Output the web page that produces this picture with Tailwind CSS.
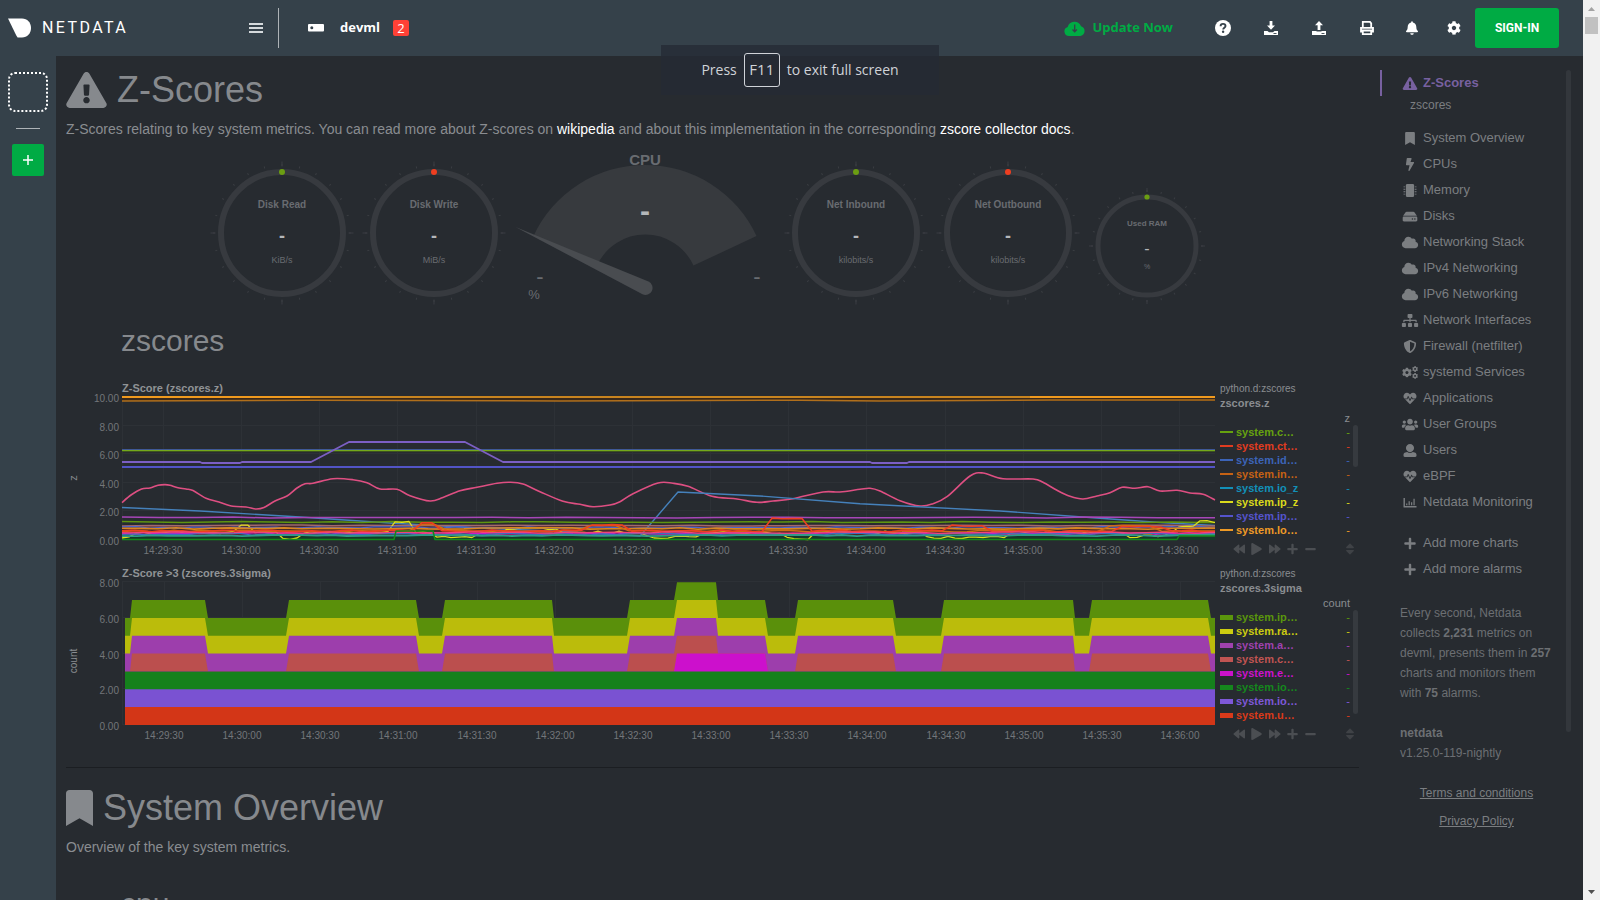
<!DOCTYPE html>
<html lang="en">
<head>
<meta charset="utf-8">
<title>devml - Netdata</title>
<script src="https://cdn.jsdelivr.net/npm/@tailwindcss/browser@4"></script>
</head>
<body class="h-screen overflow-hidden bg-[#272b30] font-['Liberation_Sans',Arial,sans-serif] text-[#8a8d91]">

<!-- Icon definitions -->
<svg class="hidden" aria-hidden="true">
  <symbol id="warn" viewBox="0 0 576 512"><path d="M569.517 440.013C587.975 472.007 564.806 512 527.94 512H48.054c-36.937 0-59.999-40.055-41.577-71.987L246.423 23.985c18.467-32.009 64.72-31.951 83.154 0l239.94 416.028zM288 354c-25.405 0-46 20.595-46 46s20.595 46 46 46 46-20.595 46-46-20.595-46-46-46zm-43.673-165.346l7.418 136c.347 6.364 5.609 11.346 11.982 11.346h48.546c6.373 0 11.635-4.982 11.982-11.346l7.418-136c.375-6.874-5.098-12.654-11.982-12.654h-63.383c-6.884 0-12.356 5.78-11.981 12.654z"/></symbol>
  <symbol id="bookmark" viewBox="0 0 384 512"><path d="M0 512V48C0 21.49 21.49 0 48 0h288c26.51 0 48 21.49 48 48v464L192 400 0 512z"/></symbol>
  <symbol id="bolt" viewBox="0 0 320 512"><path d="M296 160H180.6l42.6-129.8C227.2 15 215.7 0 200 0H56C44 0 33.8 8.9 32.2 20.8l-32 240C-1.7 275.2 9.5 288 24 288h118.7L96.6 482.5c-3.6 15.2 8 29.5 23.3 29.5 8.4 0 16.4-4.4 20.8-12l176-304c9.3-15.9-2.2-36-20.7-36z"/></symbol>
  <symbol id="chip" viewBox="0 0 512 512"><path d="M144 0h224a48 48 0 0 1 48 48v416a48 48 0 0 1-48 48H144a48 48 0 0 1-48-48V48a48 48 0 0 1 48-48z"/><path d="M0 94h72v36H0zM0 190h72v36H0zM0 286h72v36H0zM0 382h72v36H0zM440 94h72v36h-72zM440 190h72v36h-72zM440 286h72v36h-72zM440 382h72v36h-72z"/></symbol>
  <symbol id="hdd" viewBox="0 0 576 512"><path d="M576 304v96c0 26.51-21.49 48-48 48H48c-26.51 0-48-21.49-48-48v-96c0-26.51 21.49-48 48-48h480c26.51 0 48 21.49 48 48zm-48-80a79.557 79.557 0 0 1 30.777 6.165L462.25 85.374A48.003 48.003 0 0 0 422.311 64H153.689a48 48 0 0 0-39.938 21.374L17.223 230.165A79.557 79.557 0 0 1 48 224h480zm-48 96c-17.673 0-32 14.327-32 32s14.327 32 32 32 32-14.327 32-32-14.327-32-32-32zm-96 0c-17.673 0-32 14.327-32 32s14.327 32 32 32 32-14.327 32-32-14.327-32-32-32z"/></symbol>
  <symbol id="cloud" viewBox="0 0 640 512"><path d="M537.6 226.6c4.1-10.7 6.4-22.4 6.4-34.6 0-53-43-96-96-96-19.7 0-38.1 6-53.3 16.2C367 64.2 315.3 32 256 32c-88.4 0-160 71.6-160 160 0 2.7.1 5.4.2 8.1C40.2 219.8 0 273.2 0 336c0 79.5 64.5 144 144 144h368c70.7 0 128-57.3 128-128 0-61.9-44-113.6-102.4-125.4z"/></symbol>
  <symbol id="sitemap" viewBox="0 0 640 512"><path d="M128 352H32c-17.67 0-32 14.33-32 32v96c0 17.67 14.33 32 32 32h96c17.67 0 32-14.33 32-32v-96c0-17.67-14.33-32-32-32zm-24-80h192v48h48v-48h192v48h48v-57.59c0-21.17-17.23-38.41-38.41-38.41H344v-64h40c17.67 0 32-14.33 32-32V32c0-17.67-14.33-32-32-32H256c-17.67 0-32 14.33-32 32v96c0 17.67 14.33 32 32 32h40v64H94.41C73.23 224 56 241.23 56 262.41V320h48v-48zm264 80h-96c-17.67 0-32 14.33-32 32v96c0 17.67 14.33 32 32 32h96c17.67 0 32-14.33 32-32v-96c0-17.67-14.33-32-32-32zm240 0h-96c-17.67 0-32 14.33-32 32v96c0 17.67 14.33 32 32 32h96c17.67 0 32-14.33 32-32v-96c0-17.67-14.33-32-32-32z"/></symbol>
  <symbol id="shield" viewBox="0 0 512 512"><path d="M466.5 83.7l-192-80a48.15 48.15 0 0 0-36.9 0l-192 80C27.7 91.1 16 108.6 16 128c0 198.5 114.5 335.7 221.5 380.3 11.8 4.9 25.1 4.9 36.9 0C360.1 472.6 496 349.3 496 128c0-19.4-11.7-36.9-29.5-44.3zM256.1 446.3l-.1-381 175.9 73.3c-3.3 151.4-82.1 261.1-175.8 307.7z"/></symbol>
  <symbol id="cog" viewBox="0 0 512 512"><path d="M487.4 315.7l-42.6-24.6c4.3-23.2 4.3-47 0-70.2l42.6-24.6c4.9-2.8 7.1-8.6 5.5-14-11.1-35.6-30-67.8-54.7-94.6-3.8-4.1-10-5.1-14.8-2.3L380.8 110c-17.9-15.4-38.5-27.3-60.8-35.1V25.8c0-5.6-3.9-10.5-9.4-11.7-36.7-8.2-74.3-7.8-109.2 0-5.5 1.2-9.4 6.1-9.4 11.7V75c-22.2 7.9-42.8 19.8-60.8 35.1L88.7 85.5c-4.9-2.8-11-1.9-14.8 2.3-24.7 26.7-43.6 58.9-54.7 94.6-1.7 5.4.6 11.2 5.5 14L67.3 221c-4.3 23.2-4.3 47 0 70.2l-42.6 24.6c-4.9 2.8-7.1 8.6-5.5 14 11.1 35.6 30 67.8 54.7 94.6 3.8 4.1 10 5.1 14.8 2.3l42.6-24.6c17.9 15.4 38.5 27.3 60.8 35.1v49.2c0 5.6 3.9 10.5 9.4 11.7 36.7 8.2 74.3 7.8 109.2 0 5.5-1.2 9.4-6.1 9.4-11.7v-49.2c22.2-7.9 42.8-19.8 60.8-35.1l42.6 24.6c4.9 2.8 11 1.9 14.8-2.3 24.7-26.7 43.6-58.9 54.7-94.6 1.5-5.5-.7-11.3-5.6-14.1zM256 336c-44.1 0-80-35.9-80-80s35.9-80 80-80 80 35.9 80 80-35.9 80-80 80z"/></symbol>
  <symbol id="cogs" viewBox="0 0 640 512"><use href="#cog" x="0" y="56" width="400" height="400"/><use href="#cog" x="400" y="0" width="240" height="240"/><use href="#cog" x="400" y="272" width="240" height="240"/></symbol>
  <symbol id="heart" viewBox="0 0 512 512"><path d="M320.2 243.8l-49.7 99.4c-6 12.1-23.4 11.7-28.9-.6l-56.9-126.3-30 71.7H60.6l182.5 186.5c7.1 7.3 18.6 7.3 25.7 0L451.4 288H342.3l-22.1-44.2zM473.7 73.9l-2.4-2.5c-51.5-52.6-135.8-52.6-187.4 0L256 100l-27.9-28.5c-51.5-52.7-135.9-52.7-187.4 0l-2.4 2.4C-10.4 123.7-12.5 203 31 256h102.4l35.9-86.2c5.4-12.9 23.6-13.1 29.2-.4l58.2 129.3 49-97.9c5.9-11.8 22.7-11.8 28.6 0l27.6 55.2H481c43.5-53 41.4-132.3-7.3-182.1z"/></symbol>
  <symbol id="users" viewBox="0 0 640 512"><path d="M96 224c35.3 0 64-28.7 64-64s-28.7-64-64-64-64 28.7-64 64 28.7 64 64 64zm448 0c35.3 0 64-28.7 64-64s-28.7-64-64-64-64 28.7-64 64 28.7 64 64 64zm32 32h-64c-17.6 0-33.5 7.1-45.1 18.6 40.3 22.1 68.9 62 75.1 109.4h66c17.7 0 32-14.3 32-32v-32c0-35.3-28.7-64-64-64zm-256 0c61.9 0 112-50.1 112-112S381.9 32 320 32 208 82.1 208 144s50.1 112 112 112zm76.8 32h-8.3c-20.8 10-43.9 16-68.5 16s-47.6-6-68.5-16h-8.3C179.6 288 128 339.6 128 403.2V432c0 26.5 21.5 48 48 48h288c26.5 0 48-21.5 48-48v-28.8c0-63.6-51.6-115.2-115.2-115.2zm-223.7-13.4C161.5 263.1 145.6 256 128 256H64c-35.3 0-64 28.7-64 64v32c0 17.7 14.3 32 32 32h65.9c6.3-47.4 34.9-87.3 75.2-109.4z"/></symbol>
  <symbol id="user" viewBox="0 0 512 512"><path d="M256 0c88.366 0 160 71.634 160 160s-71.634 160-160 160S96 248.366 96 160 167.634 0 256 0zm183.283 333.821l-71.313-17.828c-74.923 53.89-165.738 41.864-223.94 0l-71.313 17.828C29.981 344.505 0 382.903 0 426.955V464c0 26.51 21.49 48 48 48h416c26.51 0 48-21.49 48-48v-37.045c0-44.052-29.981-82.45-72.717-93.134z"/></symbol>
  <symbol id="bars" viewBox="0 0 512 512"><path d="M0 76h56v320h456v56H20a20 20 0 0 1-20-20zM104 300h48v64h-48zM200 204h48v160h-48zM296 250h48v114h-48zM392 108h48v256h-48z"/></symbol>
  <symbol id="plus" viewBox="0 0 448 512"><path d="M416 208H272V64c0-17.67-14.33-32-32-32h-32c-17.67 0-32 14.33-32 32v144H32c-17.67 0-32 14.33-32 32v32c0 17.67 14.33 32 32 32h144v144c0 17.67 14.33 32 32 32h32c17.67 0 32-14.33 32-32V304h144c17.67 0 32-14.33 32-32v-32c0-17.67-14.33-32-32-32z"/></symbol>
  <symbol id="minus" viewBox="0 0 448 512"><path d="M416 208H32c-17.67 0-32 14.33-32 32v32c0 17.67 14.33 32 32 32h384c17.67 0 32-14.33 32-32v-32c0-17.67-14.33-32-32-32z"/></symbol>
  <symbol id="play" viewBox="0 0 448 512"><path d="M424.4 214.7L72.4 6.6C43.8-10.3 0 6.1 0 47.9V464c0 37.5 40.7 60.1 72.4 41.3l352-208c31.4-18.5 31.5-64.1 0-82.6z"/></symbol>
  <symbol id="fwd" viewBox="0 0 512 512"><path d="M0 96v320c0 27 31 41 52 24l188-154v130c0 27 31 41 52 24l192-160c15-13 15-36 0-48L292 72c-21-17-52-3-52 24v130L52 72C31 55 0 69 0 96z"/></symbol>
  <symbol id="sort" viewBox="0 0 320 512"><path d="M41 288h238c21 0 32 26 17 41L177 448c-9 9-25 9-34 0L24 329c-15-15-4-41 17-41zM296 183L177 64c-9-9-25-9-34 0L24 183c-15 15-4 41 17 41h238c21 0 32-26 17-41z"/></symbol>
  <symbol id="bell" viewBox="0 0 448 512"><path d="M224 512c35.32 0 63.97-28.65 63.97-64H160.03c0 35.35 28.65 64 63.97 64zm215.39-149.71c-19.32-20.76-55.47-51.99-55.47-154.29 0-77.7-54.48-139.9-127.94-155.16V32c0-17.67-14.32-32-31.98-32s-31.98 14.33-31.98 32v20.84C118.56 68.1 64.08 130.3 64.08 208c0 102.3-36.15 133.53-55.47 154.29-6 6.45-8.66 14.16-8.61 21.71.11 16.4 12.98 32 32.1 32h383.8c19.12 0 32-15.6 32.1-32 .05-7.55-2.61-15.27-8.61-21.71z"/></symbol>
</svg>

<div class="flex h-screen">
  <div class="relative flex min-w-0 flex-1 flex-col">

    <header class="flex h-14 shrink-0 items-center bg-[#35414a] text-white">
      <a href="#" class="flex items-center gap-[10px] pl-2" aria-label="Netdata">
        <svg class="h-5 w-6" viewBox="0 0 24 20" fill="currentColor"><path d="M0 .5h14C19.300.5 23 4.600 23 10s-3.800 9.500-9 9.500H9.600L8.300 17.400z"/></svg>
        <span class="w-[86px] font-['Roboto',sans-serif] text-base leading-5 tracking-[0.15em]">NETDATA</span>
      </a>
      <button type="button" class="ml-[121px] grid h-6 w-[14px] place-items-center" aria-label="Menu">
        <svg class="h-3 w-[14px]" viewBox="0 0 14 12" fill="#d5d9dc"><path d="M0 1h14v2H0zM0 5h14v2H0zM0 9h14v2H0z"/></svg>
      </button>
      <div class="ml-[15px] h-10 w-px bg-[#aeb3b7]"></div>
      <svg class="ml-[29px] h-2 w-4" viewBox="0 0 16 8"><rect width="16" height="7.500" rx="1" fill="#fff"/><circle cx="3.800" cy="3.800" r="1.500" fill="#35414a"/></svg>
      <span class="ml-4 font-['Open_Sans',sans-serif] text-[13px] font-bold">devml</span>
      <span class="ml-[13px] grid size-4 place-items-center rounded-xs bg-[#ff4136] font-['Open_Sans',sans-serif] text-[13px] leading-4">2</span>

      <div class="ml-auto flex items-center pr-6">
        <button type="button" class="mr-[26px] flex items-center gap-[7px] font-['Open_Sans',sans-serif] text-[13px] font-bold text-[#00ab44]">
          <svg class="h-[18px] w-[21px]" viewBox="0 0 21 18"><path fill="currentColor" d="M5 17a4.600 4.600 0 0 1-1.300-9A7 7 0 0 1 17 7.300 5 5 0 0 1 16.500 17z"/><path d="M10.700 5.500v7M8.500 10.500l2.200 2.300 2.200-2.300" fill="none" stroke="#35414a" stroke-width="1.300"/></svg>
          Update Now
        </button>
        <button type="button" class="grid h-10 w-12 place-items-center" aria-label="Help"><svg class="size-4" viewBox="0 0 16 16"><circle cx="8" cy="8" r="8" fill="#fff"/><path d="M5.600 6.200C5.600 4.700 6.600 3.900 8 3.900s2.500.9 2.500 2.200c0 1.700-2.300 1.800-2.300 3.500" fill="none" stroke="#35414a" stroke-width="1.900"/><circle cx="8.100" cy="11.800" r="1.200" fill="#35414a"/></svg></button>
        <button type="button" class="grid h-10 w-12 place-items-center" aria-label="Import"><svg class="h-[14px] w-[14px]" viewBox="0 0 14 14" fill="#fff"><path d="M5.600 0h2.800v4.500H11L7 8.700 3 4.500h2.600zM0 10h3.500L5 11.200h4L10.500 10H14v4H0z"/><path d="M9.500 12h3v.9h-3z" fill="#35414a"/></svg></button>
        <button type="button" class="grid h-10 w-12 place-items-center" aria-label="Export"><svg class="h-[14px] w-[14px]" viewBox="0 0 14 14" fill="#fff"><path d="M5.600 9h2.800V4.200H11L7 0 3 4.200h2.600zM0 10h4.500v.5h5V10H14v4H0z"/><path d="M9.500 12h3v.9h-3z" fill="#35414a"/></svg></button>
        <button type="button" class="grid h-10 w-12 place-items-center" aria-label="Print"><svg class="h-[14px] w-[14px]" viewBox="0 0 14 14" fill="none" stroke="#fff" stroke-width="1.800"><path d="M2.800 6V.900h7.200l1.200 1.500V6"/><path d="M2.800 10.500H1V6.800h12v3.700h-1.800M2.800 9.500h8.400v3.600H2.800z"/></svg></button>
        <button type="button" class="grid h-10 w-[42px] place-items-center" aria-label="Alarms"><svg class="h-[14px] w-3 fill-white"><use href="#bell"/></svg></button>
        <button type="button" class="grid h-10 w-[42px] place-items-center" aria-label="Settings"><svg class="size-[14px] fill-white"><use href="#cog"/></svg></button>
        <button type="button" class="h-10 w-[84px] rounded-[3px] bg-[#00ab44] font-['Roboto',sans-serif] text-xs font-bold">SIGN-IN</button>
      </div>
    </header>

    <div class="flex min-h-0 flex-1">
      <nav class="flex w-14 shrink-0 flex-col items-center bg-[#35414a] pt-4" aria-label="Spaces">
        <button type="button" class="size-10 rounded-[7px] border-2 border-dotted border-white" aria-label="Space"></button>
        <div class="mt-4 h-px w-6 bg-[#aeb3b7]"></div>
        <button type="button" class="mt-[15px] grid size-8 place-items-center rounded-xs bg-[#00ab44]" aria-label="Add space"><svg class="size-[10px]" viewBox="0 0 10 10" stroke="#fff" stroke-width="1.500"><path d="M5 0v10M0 5h10"/></svg></button>
      </nav>

      <main class="min-w-0 flex-1 overflow-hidden pl-[10px]">
        <h1 class="mt-[14px] flex items-center gap-[10px] text-4xl leading-10 text-[#86898d]"><svg class="h-9 w-[41px] fill-[#86898d]"><use href="#warn"/></svg>Z-Scores</h1>
        <p class="mt-[9px] text-sm leading-5">Z-Scores relating to key system metrics. You can read more about Z-scores on <a href="#" class="text-white">wikipedia</a> and about this implementation in the corresponding <a href="#" class="text-white">zscore collector docs</a>.</p>

        <div id="gauges" class="mt-[10px] flex h-40 items-end justify-center pr-[10px]"></div>

        <h2 class="mt-[14px] pl-[55px] text-3xl leading-9 text-[#86898d]">zscores</h2>
        <div id="charts" class="mt-[22px] flex flex-col gap-1"></div>

        <hr class="mt-5 border-[#1b1e22]">
        <h1 class="mt-5 flex items-center gap-[10px] text-4xl leading-10 text-[#86898d]"><svg class="h-9 w-[27px] fill-[#86898d]"><use href="#bookmark"/></svg>System Overview</h1>
        <p class="mt-[9px] text-sm leading-5">Overview of the key system metrics.</p>
        <h2 class="mt-[29px] pl-[55px] text-3xl leading-9 text-[#86898d]">cpu</h2>
      </main>

      <aside class="flex w-56 shrink-0 justify-between overflow-hidden pl-[21px] pr-3 pt-[14px]">
        <div class="w-[173px]">
          <ul id="menu" class="text-[13px] text-[#7b7e81]"></ul>
          <div class="mt-[21px] pl-5 text-xs leading-5 text-[#6c6f73]">
            <p>Every second, Netdata collects <b>2,231</b> metrics on devml, presents them in <b>257</b> charts and monitors them with <b>75</b> alarms.</p>
            <p class="mt-5"><b>netdata</b><br>v1.25.0-119-nightly</p>
            <p class="mt-5 text-center text-[#7b7e81]"><a href="#" class="underline">Terms and conditions</a></p>
            <p class="mt-2 text-center text-[#7b7e81]"><a href="#" class="underline">Privacy Policy</a></p>
          </div>
        </div>
        <div class="h-[662px] w-[5px] rounded-sm bg-[#33373c]"></div>
      </aside>
    </div>

    <!-- Full-screen hint -->
    <div class="absolute left-[661px] top-[45px] flex h-[50px] w-[278px] items-center justify-center gap-[7px] bg-[#262b35]/80 pb-px font-['Open_Sans',sans-serif] text-[14px] text-[#d0d3d8]">
      Press <kbd class="grid h-[34px] w-9 place-items-center rounded-[3px] border border-[#d0d3d8] font-['Open_Sans',sans-serif] text-[15px]">F11</kbd> to exit full screen
    </div>
  </div>

  <!-- Page scroll bar -->
  <div class="flex w-[17px] shrink-0 flex-col items-center bg-[#f1f1f1] pb-[6px] pt-[7px]">
    <svg class="h-1 w-[7px]" viewBox="0 0 7 4" fill="#a3a3a3"><path d="M0 4h7L3.500 0z"/></svg>
    <div class="mt-[6px] h-[17px] w-[13px] bg-[#c1c1c1]"></div>
    <svg class="mt-auto h-1 w-[7px]" viewBox="0 0 7 4" fill="#505050"><path d="M0 0h7L3.500 4z"/></svg>
  </div>
</div>

<script>
/* ---------- side menu ---------- */
const menu = [
  ['bookmark','System Overview'],['bolt','CPUs'],['chip','Memory'],['hdd','Disks'],['cloud','Networking Stack'],
  ['cloud','IPv4 Networking'],['cloud','IPv6 Networking'],['sitemap','Network Interfaces'],['shield','Firewall (netfilter)'],
  ['cogs','systemd Services'],['heart','Applications'],['users','User Groups'],['user','Users'],['heart','eBPF'],['bars','Netdata Monitoring']
];
const item = ([icon, name]) => `<li><a href="#" class="flex h-[26px] items-center gap-[3px] pl-5"><svg class="h-[13px] w-5 fill-[#7b7e81]"><use href="#${icon}"/></svg>${name}</a></li>`;
document.getElementById('menu').innerHTML =
  `<li class="mb-[11px]"><a href="#" class="flex h-[26px] items-center gap-[3px] border-l-2 border-[#7861a0] pl-[18px] font-bold text-[#7861a0]"><svg class="h-[13px] w-5 fill-[#7861a0]"><use href="#warn"/></svg>Z-Scores</a>
   <a href="#" class="block h-[18px] pl-[30px] text-xs leading-[18px]">zscores</a></li>` +
  menu.map(item).join('') + '<li class="h-[15px]"></li>' +
  [['plus','Add more charts'],['plus','Add more alarms']].map(item).join('');

/* ---------- gauges ---------- */
const ring = (title, unit, dot) => `<svg class="size-[152px] shrink-0" viewBox="0 0 152 152" text-anchor="middle">
  <circle cx="76" cy="76" r="61" fill="none" stroke="#373a3f" stroke-width="6"/>
  <circle cx="76" cy="76" r="68" fill="none" stroke="#3a3d42" stroke-width="2" pathLength="24" stroke-dasharray=".06 .94" stroke-dashoffset=".03"/>
  <circle cx="76" cy="76" r="69" fill="none" stroke="#3a3d42" stroke-width="5" pathLength="4" stroke-dasharray=".01 .99" stroke-dashoffset=".005"/>
  <circle cx="76" cy="15" r="3" fill="${dot}"/>
  <text x="76" y="51" font-size="10" font-weight="bold" fill="#696c71">${title}</text>
  <text x="76" y="85" font-size="18" font-weight="bold" fill="#b4b7ba">-</text>
  <text x="76" y="106" font-size="9" fill="#696c71">${unit}</text></svg>`;
const cpu = `<svg class="h-40 w-[270px] shrink-0" viewBox="510 149 270 160" text-anchor="middle">
  <path d="M533.500 236A123 123 0 0 1 756.500 236L693.500 265.600A53 53 0 0 0 597 265.600Z" fill="#373a3e"/>
  <path d="M515.500 227L648.500 281.600A7 7 0 1 1 642.500 294.300Z" fill="#494c50"/>
  <text x="645" y="165" font-size="15" font-weight="bold" fill="#696c71">CPU</text>
  <text x="645" y="221" font-size="30" font-weight="bold" fill="#b4b7ba">-</text>
  <text x="540" y="284" font-size="22" fill="#696c71">-</text><text x="757" y="284" font-size="22" fill="#696c71">-</text>
  <text x="534" y="299" font-size="13" fill="#696c71">%</text></svg>`;
const ram = `<svg class="size-[126px] shrink-0" viewBox="0 0 126 126" text-anchor="middle">
  <circle cx="63" cy="63" r="49" fill="none" stroke="#373a3f" stroke-width="5"/>
  <circle cx="63" cy="63" r="55" fill="none" stroke="#3a3d42" stroke-width="2" pathLength="24" stroke-dasharray=".07 .93" stroke-dashoffset=".035"/>
  <circle cx="63" cy="63" r="56" fill="none" stroke="#3a3d42" stroke-width="4" pathLength="4" stroke-dasharray=".012 .988" stroke-dashoffset=".006"/>
  <circle cx="63" cy="14" r="2.600" fill="#6b9e12"/>
  <text x="63" y="43" font-size="8" font-weight="bold" fill="#696c71">Used RAM</text>
  <text x="63" y="71" font-size="16" fill="#b4b7ba">-</text>
  <text x="63" y="86" font-size="7" fill="#696c71">%</text></svg>`;
document.getElementById('gauges').innerHTML = ring('Disk Read','KiB/s','#6b9e12') + ring('Disk Write','MiB/s','#ee3e20') + cpu +
  ring('Net Inbound','kilobits/s','#6b9e12') + ring('Net Outbound','kilobits/s','#ee3e20') + ram;

/* ---------- charts ---------- */
const L = 122, R = 1215;
const line = (pts, color, w = 1.2) => `<polyline points="${pts.map(p => p.join()).join(' ')}" fill="none" stroke="${color}" stroke-width="${w}" stroke-linejoin="round"/>`;
const flat = (y, color, w) => line([[L, y], [R, y]], color, w);
let seed = 11;
const rnd = () => (seed = (seed * 16807) % 2147483647) / 2147483647;
const noisy = (base, amp, color, step = 12, w = 1.2, bumps = []) => {
  const pts = [];
  for (let x = L; x <= R; x += step) {
    const b = bumps.find(q => x >= q[0] && x <= q[1]);
    pts.push([x, +(base + (b ? b[2] : 0) + (rnd() - .5) * amp * 2).toFixed(1)]);
  }
  pts.push([R, pts[pts.length - 1][1]]);
  return line(pts, color, w);
};
const smooth = (p, color, w) => {
  let d = `M${p[0]}`;
  for (let i = 0; i < p.length - 1; i++) {
    const a = p[i - 1] || p[i], b = p[i], c = p[i + 1], e = p[i + 2] || c;
    d += `C${b[0] + (c[0] - a[0]) / 6} ${b[1] + (c[1] - a[1]) / 6} ${c[0] - (e[0] - b[0]) / 6} ${c[1] - (e[1] - b[1]) / 6} ${c}`;
  }
  return `<path d="${d}" fill="none" stroke="${color}" stroke-width="${w}"/>`;
};
const grid = (top, bottom, n, x0) => {
  let s = `<path d="M${L + .5} ${top}V${bottom}`;
  for (let i = 0; i < 14; i++) s += `M${Math.round(x0 + i * 78.15) + .5} ${top}V${bottom}`;
  for (let i = 0; i <= n; i++) s += `M${L} ${Math.round(top + (bottom - top) * i / n) - .5}H${R}`;
  return s + '" stroke="#2d3136" fill="none"/>';
};
const labels = (top, bottom, n, x0, base) => {
  let s = '<g font-size="10" fill="#73767a">';
  for (let i = 0; i <= n; i++) s += `<text x="119" y="${Math.round(top + (bottom - top) * i / n) + 5}" text-anchor="end">${((n - i) * 2).toFixed(2)}</text>`;
  for (let i = 0; i < 14; i++) {
    const t = 29.5 + i / 2, m = Math.floor(t);
    s += `<text x="${Math.round(x0 + i * 78.15)}" y="${base}" text-anchor="middle">14:${m}:${t > m ? '30' : '00'}</text>`;
  }
  return s + '</g>';
};
const pinkPts = [[122,502.600],[131,495],[141.600,489],[150,488],[158,485.200],[165,484.600],[170,485.200],[177,487.500],[186,489],[193,490.500],[206,498.300],[219,502],[233,506.300],[246,507],[256,509],[264,507.500],[275,501],[287,496],[297,488],[305,483.700],[313,483.300],[333,478.700],[353,479.700],[367,482.700],[380,489],[397,489.300],[410,495.700],[430,501],[443,497.500],[460,490.700],[477,487.300],[497,483.300],[510,482.300],[523,484],[540,491.700],[563,501.300],[580,504.300],[593,506.700],[610,505],[620,501.700],[633,493.700],[658,483],[673,483.300],[688,486.300],[712,496.300],[737,499],[757,502.300],[773,501],[793,498.700],[823,492],[840,492],[860,489.300],[870,488.300],[880,491],[900,500.700],[920,506],[933,503.700],[947,496.700],[970,476],[983,473],[1003,478.700],[1033,479],[1043,482.300],[1057,490.300],[1070,496.300],[1083,499],[1097,496],[1110,492.700],[1122,487.300],[1135,488.300],[1148,486.700],[1160,491],[1177,490.300],[1190,493],[1203,494.300],[1215,500]];
const violetPts = [[122,462],[200,462],[202,463],[240,463],[242,462],[311,462],[349,442],[465,442],[503,462],[870,462],[872,463],[907,463],[909,462],[1215,462]];
const chart1 = `<svg class="block h-auto min-w-0 flex-1" viewBox="66 381 1154 181" role="img" aria-label="Z-Score chart">
  <text x="122" y="392" font-size="11" font-weight="bold" fill="#909396">Z-Score (zscores.z)</text>
  ${grid(397, 540, 5, 163)}${labels(397, 540, 5, 163, 554)}
  <text transform="translate(77 478) rotate(-90)" font-size="11" text-anchor="middle" fill="#8a8d91">z</text>
  <path d="M${L} 397H${R}V401H${L}z" fill="#39291b"/>
  <path d="M${L} 526H${R}V535H${L}z" fill="#4b2a2a"/><path d="M${L} 535H${R}V540H${L}z" fill="#16382a"/>
  ${line([[L,397],[294,397],[R,397]],'#c8841f',2)}${line([[L,397],[310,397]],'#f09a1e',2)}${line([[1030,397],[R,397]],'#f09a1e',2)}
  ${line([[L,401],[310,400.200],[560,401],[800,400.200],[880,401],[1050,400],[R,400]],'#b06f1c',1.500)}
  <path d="M${L} 449H${R}V450H${L}z" fill="#3f5896"/><path d="M${L} 450H${R}V451H${L}z" fill="#74a81c"/><path d="M${L} 451H${R}V452H${L}z" fill="#3c5220"/>
  ${line(violetPts,'#7c5fc4',1.800)}${flat(467,'#5254c6',1.800)}
  ${smooth(pinkPts,'#de4f82',1.600)}
  ${line([[122,507.500],[200,511],[300,517],[390,523],[460,527],[550,531],[640,536],[647,528],[678,492],[760,496],[860,503.700],[1000,511],[1093,517.700],[1160,522.500],[1215,525.500]],'#4581bb',1.400)}
  ${noisy(517.600,.5,'#a746b8',37,1.500)}${noisy(522,.5,'#5f9410',30,1.500)}${noisy(525.500,.4,'#a5686a',30,1.500)}
  ${noisy(532.500,1.400,'#dede1a',7,1.300,[[122,135,5],[238,252,-6],[278,302,5.500],[394,412,-11],[434,476,5],[505,560,-4],[645,700,4.500],[785,810,6],[925,1010,5],[1130,1165,4],[1178,1196,-6],[1197,1220,-11]])}
  ${noisy(527.500,.9,'#4b64d0',14)}${noisy(528.500,.7,'#d9861f',18,1.600)}
  ${noisy(531,1,'#d06c12',13,1.500,[[415,434,-7],[585,625,-5],[1108,1160,-5]])}
  ${noisy(533.500,1,'#c91fc4',11,1.400)}${noisy(534,1,'#3c6fc0',13)}
  ${noisy(531,1,'#ee3f20',10,1.600,[[413,434,-8],[590,630,-6],[772,808,-12.500],[945,986,-5],[1120,1164,-4]])}
  ${noisy(532.500,.8,'#f0437c',16,1.300)}${noisy(535.500,.7,'#2f9a86',15,1.800)}
  ${line([[122,539.500],[394,539.500],[396,531],[433,531],[435,539.500],[1177,539.500],[1179,536],[1215,536]],'#138a1b',1.500)}
</svg>`;

const stepRamp = list => x => {
  for (const [a, b, c, d] of list) if (x >= a && x <= d) return x < b ? (x - a) / (b - a) : x > c ? (d - x) / (d - c) : 1;
  return 0;
};
const cList = [[130,132,205,208],[286,289,416,419],[442,445,552,554],[627,630,716,718],[795,798,893,896],[941,944,1073,1075],[1089,1092,1208,1211]];
const mList = [[674,677,765,768]];
const cF = stepRamp(cList), mF = stepRamp(mList);
const xs = [125, ...new Set([...cList, ...mList].flat())].sort((a, b) => a - b).concat(R);
const Y = v => (725 - v * 17.85).toFixed(1);
const area = (fn, color) => `<polygon points="125,725 ${xs.map(x => x + ',' + Y(fn(x))).join(' ')} ${R},725" fill="${color}"/>`;
const chart2 = `<svg class="block h-auto min-w-0 flex-1" viewBox="66 566 1154 181" role="img" aria-label="Z-Score above 3 chart">
  <text x="122" y="577" font-size="11" font-weight="bold" fill="#909396">Z-Score &gt;3 (zscores.3sigma)</text>
  ${grid(582, 725, 4, 164)}${labels(582, 725, 4, 164, 739)}
  <text transform="translate(77 661) rotate(-90)" font-size="10" text-anchor="middle" fill="#8a8d91">count</text>
  ${area(x => 6 + cF(x) + mF(x), '#5a900b')}${area(x => 5 + cF(x) + mF(x), '#bbbc0b')}${area(x => 4 + cF(x) + mF(x), '#9d3eac')}
  ${area(x => 3 + cF(x) + mF(x), '#bb4f4e')}${area(x => 3 + mF(x), '#cc10cc')}${area(x => 3, '#15811c')}${area(x => 2, '#7a52d2')}${area(x => 1, '#d33617')}
</svg>`;

const legend = (name, unit, thumb, swatch, rows) => `<div class="w-[139px] shrink-0 pt-[2px]">
  <div class="text-[10px] leading-3">python.d:zscores</div>
  <div class="text-[11px] font-bold leading-4">${name}</div>
  <div class="pr-[9px] text-right text-[11px] leading-[14px]">${unit}</div>
  <div class="flex justify-between pr-[1px]">
    <table class="w-[130px] text-[11px] font-bold"><tbody>${rows.map(([n, c]) => `<tr class="h-[14px] leading-[14px]" style="color:${c}"><td class="w-4 p-0"><div class="${swatch}"></div></td><td class="p-0">${n}</td><td class="p-0 text-right font-normal">-</td></tr>`).join('')}</tbody></table>
    <div class="${thumb}"></div>
  </div>
  <div class="mt-1 flex h-4 items-center pl-[13px] pr-1 text-[#4b4e52]">
    <button type="button" class="w-[18px]" aria-label="Backward"><svg class="h-3 w-3 rotate-180 fill-current"><use href="#fwd"/></svg></button>
    <button type="button" class="w-[18px]" aria-label="Play"><svg class="h-3 w-[11px] fill-current"><use href="#play"/></svg></button>
    <button type="button" class="w-[18px]" aria-label="Forward"><svg class="h-3 w-3 fill-current"><use href="#fwd"/></svg></button>
    <button type="button" class="w-[18px]" aria-label="Zoom in"><svg class="h-3 w-[11px] fill-current"><use href="#plus"/></svg></button>
    <button type="button" class="w-[18px]" aria-label="Zoom out"><svg class="h-3 w-[11px] fill-current"><use href="#minus"/></svg></button>
    <button type="button" class="ml-auto" aria-label="Resize"><svg class="h-[14px] w-[10px] fill-[#3f4246]"><use href="#sort"/></svg></button>
  </div></div>`;
document.getElementById('charts').innerHTML =
  `<section class="flex items-start">${chart1}${legend('zscores.z', 'z', 'h-[42px] w-[5px] rounded-sm bg-[#363a3f]', 'h-[2px] w-[13px] bg-current', [['system.c…','#66a20f'],['system.ct…','#e03c20'],['system.id…','#3c64b8'],['system.in…','#c66214'],['system.io_z','#1290b8'],['system.ip_z','#dada1c'],['system.ip…','#5554cc'],['system.lo…','#ee9a26']])}</section>` +
  `<section class="flex items-start">${chart2}${legend('zscores.3sigma', 'count', 'h-[104px] w-[5px] rounded-sm bg-[#363a3f]', 'h-[5px] w-[13px] bg-current', [['system.ip…','#5a960c'],['system.ra…','#cccc10'],['system.a…','#9f42ae'],['system.c…','#c05452'],['system.e…','#cc12cc'],['system.io…','#15871d'],['system.io…','#7e58d8'],['system.u…','#d93a1a']])}</section>`;
</script>
</body>
</html>
